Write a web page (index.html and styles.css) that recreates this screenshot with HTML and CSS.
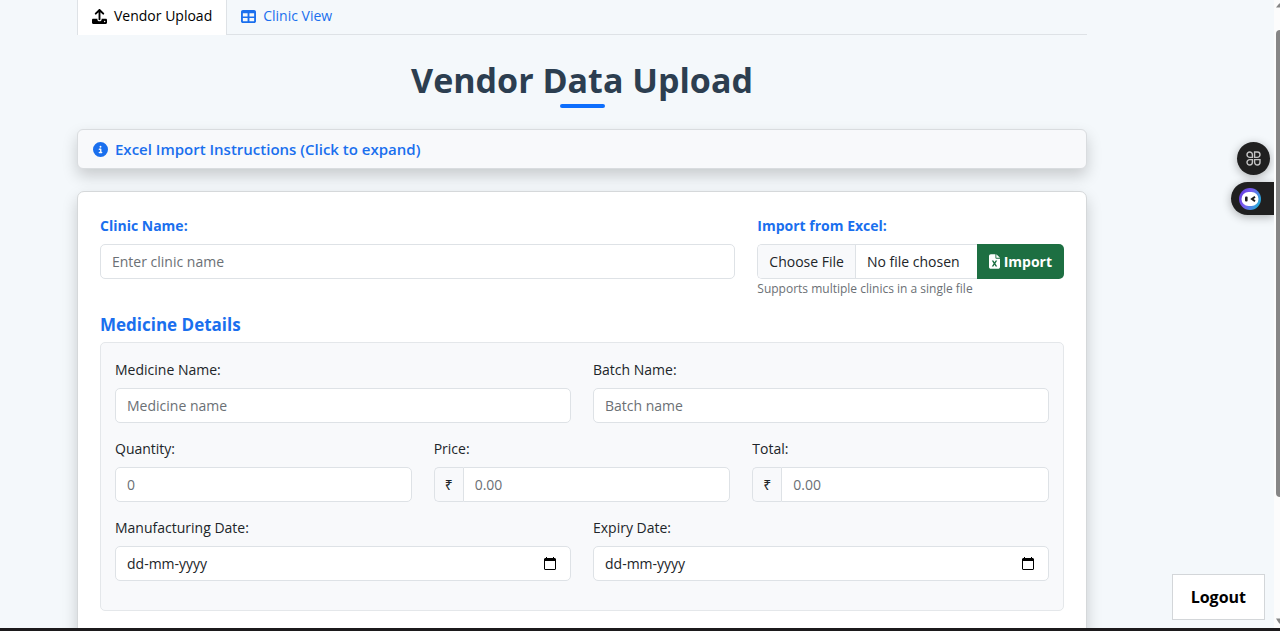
FILE: index.html
```html
<!DOCTYPE html>
<html lang="en">
<head>
<meta charset="utf-8">
<meta name="viewport" content="width=device-width, initial-scale=1">
<title>Vendor Data Upload</title>
<link rel="stylesheet" href="styles.css">
</head>
<body>
<main class="page">
  <nav class="tabs">
    <a class="tab tab-active" href="#vendor" aria-current="page">
      <svg class="icon" viewBox="0 0 512 512" aria-hidden="true"><path d="M288 109v243c0 18-14 32-32 32s-32-14-32-32V109l-73 74c-13 12-33 12-46 0s-12-33 0-46L233 9c13-12 33-12 46 0l128 128c12 13 12 33 0 46s-33 12-46 0l-73-74zM40 336h144v20c0 35 30 60 72 60s72-25 72-60v-20h144c22 0 40 18 40 40v96c0 22-18 40-40 40H40c-22 0-40-18-40-40v-96c0-22 18-40 40-40zm392 112a24 24 0 1 0 0-48 24 24 0 1 0 0 48z"/></svg>
      Vendor Upload</a>
    <a class="tab" href="#clinic-view">
      <svg class="icon" viewBox="0 0 512 512" aria-hidden="true"><path fill-rule="evenodd" d="M64 32h384c35 0 64 29 64 64v320c0 35-29 64-64 64H64c-35 0-64-29-64-64V96c0-35 29-64 64-64zm0 112v112h160V144zm224 0v112h160V144zM64 310v106h160V310zm224 0v106h160V310z"/></svg>
      Clinic View</a>
  </nav>

  <h1 class="title">Vendor Data Upload</h1>

  <button class="instructions" type="button" aria-expanded="false">
    <svg class="icon" viewBox="0 0 512 512" aria-hidden="true"><path fill-rule="evenodd" d="M256 512a256 256 0 1 0 0-512 256 256 0 1 0 0 512zm-40-176h24v-64h-24c-13 0-24-11-24-24s11-24 24-24h48c13 0 24 11 24 24v88h8c13 0 24 11 24 24s-11 24-24 24h-80c-13 0-24-11-24-24s11-24 24-24zm40-208a32 32 0 1 1 0 64 32 32 0 1 1 0-64z"/></svg>
    Excel Import Instructions (Click to expand)
  </button>

  <form class="card">
    <div class="grid">
      <div class="field span-8">
        <label class="label label-strong" for="clinic">Clinic Name:</label>
        <input class="input" id="clinic" type="text" placeholder="Enter clinic name">
      </div>
      <div class="field span-4">
        <label class="label label-strong" for="file">Import from Excel:</label>
        <div class="group">
          <input class="input file" id="file" type="file">
          <button class="import" type="button">
            <svg class="icon-file" viewBox="0 0 384 512" aria-hidden="true"><path fill-rule="evenodd" d="M64 0h160v128c0 18 14 32 32 32h128v288c0 35-29 64-64 64H64c-35 0-64-29-64-64V64C0 29 29 0 64 0zm192 0v128h128zM96 224l65 104-65 104h57l39-62 39 62h57l-65-104 65-104h-57l-39 62-39-62z"/></svg>
            Import</button>
        </div>
        <small class="help">Supports multiple clinics in a single file</small>
      </div>
    </div>

    <h2 class="section-title">Medicine Details</h2>
    <div class="grid panel">
      <div class="field span-6">
        <label class="label" for="medicine">Medicine Name:</label>
        <input class="input" id="medicine" type="text" placeholder="Medicine name">
      </div>
      <div class="field span-6">
        <label class="label" for="batch">Batch Name:</label>
        <input class="input" id="batch" type="text" placeholder="Batch name">
      </div>
      <div class="field span-4">
        <label class="label" for="quantity">Quantity:</label>
        <input class="input" id="quantity" type="text" inputmode="numeric" placeholder="0">
      </div>
      <div class="field span-4">
        <label class="label" for="price">Price:</label>
        <div class="group">
          <span class="addon">₹</span>
          <input class="input joined" id="price" type="text" inputmode="decimal" placeholder="0.00">
        </div>
      </div>
      <div class="field span-4">
        <label class="label" for="total">Total:</label>
        <div class="group">
          <span class="addon">₹</span>
          <input class="input joined" id="total" type="text" inputmode="decimal" placeholder="0.00">
        </div>
      </div>
      <div class="field span-6">
        <label class="label" for="made">Manufacturing Date:</label>
        <div class="date">
          <input class="date-text" id="made" type="text" placeholder="dd-mm-yyyy">
          <button class="date-button" type="button" aria-label="Pick manufacturing date">
            <svg class="icon-date" viewBox="0 0 12 13" aria-hidden="true"><path fill-rule="evenodd" d="M2 0h1v1h6V0h1v1h1l1 1v10l-1 1H1l-1-1V2l1-1h1zM1 4v8h10V4z"/></svg>
          </button>
        </div>
      </div>
      <div class="field span-6">
        <label class="label" for="expiry">Expiry Date:</label>
        <div class="date">
          <input class="date-text" id="expiry" type="text" placeholder="dd-mm-yyyy">
          <button class="date-button" type="button" aria-label="Pick expiry date">
            <svg class="icon-date" viewBox="0 0 12 13" aria-hidden="true"><path fill-rule="evenodd" d="M2 0h1v1h6V0h1v1h1l1 1v10l-1 1H1l-1-1V2l1-1h1zM1 4v8h10V4z"/></svg>
          </button>
        </div>
      </div>
    </div>
  </form>
</main>

<div class="widgets">
  <button class="widget-apps" type="button" aria-label="Apps">
    <svg width="15" height="15" viewBox="0 0 15 15" fill="none" stroke="#c4c4c4" stroke-width="1.4" aria-hidden="true"><path fill="none" d="M3.7 1a2.7 2.7 0 1 0 0 5.4h2.7V3.7A2.7 2.7 0 0 0 3.7 1zM11.3 6.4H8.6V1h2.7a2.7 2.7 0 0 1 0 5.4zM3.7 14a2.7 2.7 0 1 1 0-5.4h2.7v2.7A2.7 2.7 0 0 1 3.7 14zM11.3 14a2.7 2.7 0 0 0 2.7-2.7V8.6H8.6v2.7a2.7 2.7 0 0 0 2.7 2.7z"/></svg>
  </button>
  <button class="widget-bot" type="button" aria-label="Assistant">
    <svg width="22" height="22" viewBox="0 0 22 22" aria-hidden="true">
      <defs><linearGradient id="ring" x1="0" y1="0" x2="1" y2="0.5"><stop offset="0" stop-color="#5b35d8"/><stop offset=".5" stop-color="#7a5cf0"/><stop offset="1" stop-color="#2aa6d8"/></linearGradient></defs>
      <circle cx="11" cy="11" r="11" fill="url(#ring)"/>
      <rect x="2.5" y="4" width="17" height="14" rx="7" fill="#fff"/>
      <rect x="6" y="8.5" width="2.6" height="5" rx="1" fill="#1c1c1c"/>
      <path d="M16 8.8l-3 2.2 3 2.2" fill="none" stroke="#1c1c1c" stroke-width="2"/>
    </svg>
  </button>
</div>
<button class="logout" type="button">Logout</button>

<div class="scrollbar" aria-hidden="true">
  <svg class="arrow" viewBox="0 0 5 6"><path d="M0 6L4 1h1v5z"/></svg>
  <div class="thumb"></div>
  <svg class="arrow" viewBox="0 0 5 6"><path d="M0 0h5v6H4z"/></svg>
</div>
<div class="edge"></div>
</body>
</html>
```
FILE: styles.css
```css
* { box-sizing: border-box; }

body {
  margin: 0;
  height: 100vh;
  overflow: hidden;
  background: #f4f8fb;
  color: #212529;
  font: 14px/20px "Open Sans", "Noto Sans", sans-serif;
}

button, input { font: inherit; color: inherit; }
button { cursor: pointer; }
svg { display: block; flex: none; fill: currentColor; }

.page { padding: 0 193px 0 77px; }

.tabs {
  display: flex;
  border-bottom: 1px solid #dee2e6;
}
.tab {
  display: flex;
  align-items: center;
  gap: 7px;
  padding: 6px 14px 8px;
  color: #1a6fee;
  text-decoration: none;
}
.tab-active {
  margin-bottom: -1px;
  padding-bottom: 9px;
  border: solid #dee2e6;
  border-width: 0 1px;
  background: #fff;
  color: #000;
}
.icon { width: 15px; height: 15px; }

.title {
  display: flex;
  flex-direction: column;
  align-items: center;
  margin: 22px 0 21px;
  color: #2c3e50;
  font-size: 34px;
  line-height: 47px;
  font-weight: 700;
}
.title::after {
  content: "";
  width: 45px;
  height: 4px;
  border-radius: 2px;
  background: #0d6efd;
}

.instructions {
  display: flex;
  align-items: center;
  gap: 7px;
  width: 100%;
  padding: 9px 15px;
  border: 1px solid #d9dcdf;
  border-radius: 6px;
  background: #f8f9fb;
  box-shadow: 0 7px 15px rgba(0, 0, 0, 0.18);
  color: #1a6fee;
  font-size: 15px;
  font-weight: 600;
}

.card {
  margin-top: 22px;
  padding: 24px 22px 90px;
  border: 1px solid #d5d8da;
  border-radius: 7px;
  background: #fff;
  box-shadow: 0 7px 15px rgba(0, 0, 0, 0.18);
}

.grid {
  display: grid;
  grid-template-columns: repeat(12, minmax(0, 1fr));
  gap: 16px 22px;
}
.span-4 { grid-column: span 4; }
.span-6 { grid-column: span 6; }
.span-8 { grid-column: span 8; }

.label { display: block; margin-bottom: 8px; }
.label-strong { color: #1a6fee; font-weight: 700; }

.input, .date {
  width: 100%;
  height: 35px;
  padding: 0 11px;
  border: 1px solid #dee2e6;
  border-radius: 5px;
  background: #fff;
}
.input::placeholder { color: #6b7075; opacity: 1; }

.group { display: flex; }
.file {
  flex: 1;
  min-width: 0;
  padding: 0;
  border-right: 0;
  border-radius: 5px 0 0 5px;
  line-height: 33px;
}
.file::file-selector-button {
  height: 33px;
  margin: 0 11px 0 0;
  padding: 0 11px;
  border: 0;
  border-right: 1px solid #dee2e6;
  background: #f8f9fb;
  color: inherit;
  font: inherit;
}
.import {
  display: flex;
  align-items: center;
  gap: 4px;
  padding: 0 12px;
  border: 0;
  border-radius: 0 5px 5px 0;
  background: #1d6f42;
  color: #fff;
  font-weight: 700;
}
.icon-file { width: 11px; height: 15px; }
.help {
  display: block;
  color: #6b7075;
  font-size: 12px;
}

.section-title {
  margin: 14px 0 5px;
  color: #1a6fee;
  font-size: 17px;
  line-height: 24px;
  font-weight: 700;
}
.panel {
  padding: 17px 14px 29px;
  border: 1px solid #e4e7ea;
  border-radius: 5px;
  background: #f8f9fb;
}

.addon {
  display: flex;
  align-items: center;
  padding: 0 10px;
  border: 1px solid #dee2e6;
  border-right: 0;
  border-radius: 5px 0 0 5px;
  background: #f8f9fb;
}
.joined {
  flex: 1;
  min-width: 0;
  border-radius: 0 5px 5px 0;
}

.date { display: flex; align-items: center; padding-right: 14px; }
.date-text {
  flex: 1;
  min-width: 0;
  padding: 0;
  border: 0;
  background: none;
}
.date-text::placeholder { color: #212529; opacity: 1; }
.date-button { padding: 0; border: 0; background: none; color: #000; }
.icon-date { width: 12px; height: 13px; }

.widgets {
  position: fixed;
  top: 142px;
  right: 6px;
  display: flex;
  flex-direction: column;
  align-items: flex-end;
  gap: 7px;
}
.widget-apps, .widget-bot {
  display: flex;
  align-items: center;
  height: 33px;
  border: 0;
  background: #202020;
  box-shadow: 0 2px 10px rgba(0, 0, 0, 0.3);
}
.widget-apps {
  justify-content: center;
  width: 33px;
  margin-right: 4px;
  padding: 0;
  border-radius: 50%;
}
.widget-bot {
  width: 43px;
  padding: 0 8px;
  border-radius: 17px 0 0 17px;
}

.logout {
  position: fixed;
  right: 15px;
  bottom: 11px;
  padding: 11px 18px;
  border: 1px solid #d3d6d9;
  background: #fff;
  color: #000;
  font-size: 16px;
  line-height: 22px;
  font-weight: 700;
}

.scrollbar {
  position: fixed;
  top: 0;
  right: 0;
  bottom: 3px;
  display: flex;
  flex-direction: column;
  align-items: flex-end;
  width: 6px;
  padding: 2px 0 4px;
  background: #fcfcfc;
  color: #868686;
}
.arrow { width: 4px; height: 6px; }
.thumb {
  width: 4px;
  height: 75%;
  margin: 22px 0 auto;
  border-radius: 4px 0 0 4px;
  background: #868686;
}

.edge {
  position: fixed;
  right: 0;
  bottom: 0;
  left: 0;
  height: 3px;
  background: #1c1a1c;
}
```
